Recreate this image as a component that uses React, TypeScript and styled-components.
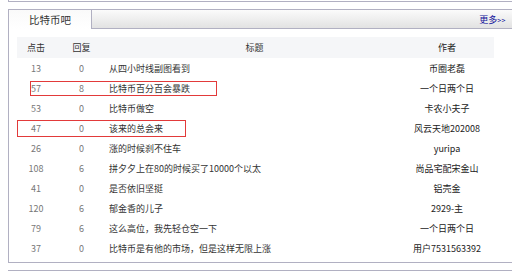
import React from "react";
import styled, { createGlobalStyle } from "styled-components";

const Global = createGlobalStyle`
  html, body { margin: 0; padding: 0; background: #fff; }
  body { font-family: "Noto Sans CJK SC", "Noto Sans", sans-serif; }
`;

const Page = styled.div`
  position: relative;
  width: 512px;
  height: 271px;
  overflow: hidden;
  padding-left: 8px;
  box-sizing: border-box;
`;

const PrevBox = styled.div`
  width: 512px;
  height: 1px;
  border-left: 1px solid #b1b0c2;
  border-bottom: 1px solid #b1b0c2;
  margin-bottom: 7px;
`;

const Panel = styled.div`
  width: 510px;
  border: 1px solid #b1b0c2;
  box-sizing: border-box;
  padding-bottom: 4px;
`;

const NextBox = styled.div`
  width: 512px;
  height: 10px;
  margin-top: 7px;
  border-left: 1px solid #b1b0c2;
  border-top: 1px solid #b1b0c2;
`;

const Header = styled.div`
  display: flex;
  height: 19px;
`;

const Tab = styled.div`
  width: 82px;
  border-right: 1px solid #b1b0c2;
  background: linear-gradient(#fafafa, #ffffff);
  display: flex;
  align-items: center;
  justify-content: center;
  font-size: 10.5px;
  color: #333;
`;

const Bar = styled.div`
  flex: 1;
  border-bottom: 1px solid #b1b0c2;
  background: linear-gradient(#fbfbfb, #e2e2e2);
  display: flex;
  align-items: center;
  justify-content: flex-end;
  padding-right: 11px;
`;

const More = styled.a`
  font-size: 9px;
  color: #10109a;
  text-decoration: none;
  margin-top: 1px;
  white-space: nowrap;
`;

const Arrows = styled.span`
  font-size: 7px;
  letter-spacing: 0.5px;
`;

const Table = styled.div`
  margin: 8px 0 0 8px;
  width: 477px;
`;

const Row = styled.div<{ $head?: boolean }>`
  display: grid;
  grid-template-columns: 38px 53px 292px 94px;
  height: ${(p) => (p.$head ? "21px" : "20px")};
  align-items: center;
  background: ${(p) => (p.$head ? "#f5f6f8" : "transparent")};
  font-size: 9px;
`;

const Num = styled.div<{ $head?: boolean }>`
  text-align: center;
  color: ${(p) => (p.$head ? "#333" : "#777")};
`;

const Title = styled.div<{ $head?: boolean }>`
  text-align: ${(p) => (p.$head ? "center" : "left")};
  padding-left: 1px;
  color: #333;
  white-space: nowrap;
`;

const Author = styled.div`
  text-align: center;
  color: #222;
  white-space: nowrap;
`;

const Mark = styled.div`
  position: absolute;
  border: 1px solid #e23a3a;
  box-sizing: border-box;
  pointer-events: none;
`;

const rows = [
  ["13", "0", "从四小时线副图看到", "币圈老磊"],
  ["57", "8", "比特币百分百会暴跌", "一个日两个日"],
  ["53", "0", "比特币做空", "卡农小夫子"],
  ["47", "0", "该来的总会来", "风云天地202008"],
  ["26", "0", "涨的时候刹不住车", "yuripa"],
  ["108", "6", "拼夕夕上在80的时候买了10000个以太", "尚品宅配宋金山"],
  ["41", "0", "是否依旧坚挺", "铝壳金"],
  ["120", "6", "郁金香的儿子", "2929-主"],
  ["79", "6", "这么高位，我先轻仓空一下", "一个日两个日"],
  ["37", "0", "比特币是有他的市场，但是这样无限上涨", "用户7531563392"],
];

export default function App() {
  return (
    <>
      <Global />
      <Page>
        <PrevBox />
        <Panel>
          <Header>
            <Tab>比特币吧</Tab>
            <Bar>
              <More href="#">
                更多<Arrows>&gt;&gt;</Arrows>
              </More>
            </Bar>
          </Header>
          <Table>
            <Row $head>
              <Num $head>点击</Num>
              <Num $head>回复</Num>
              <Title $head>标题</Title>
              <Author>作者</Author>
            </Row>
            {rows.map((r, i) => (
              <Row key={i}>
                <Num>{r[0]}</Num>
                <Num>{r[1]}</Num>
                <Title>{r[2]}</Title>
                <Author>{r[3]}</Author>
              </Row>
            ))}
          </Table>
        </Panel>
        <NextBox />
        <Mark style={{ left: 30, top: 81, width: 187, height: 15 }} />
        <Mark style={{ left: 17, top: 120, width: 169, height: 17 }} />
      </Page>
    </>
  );
}
